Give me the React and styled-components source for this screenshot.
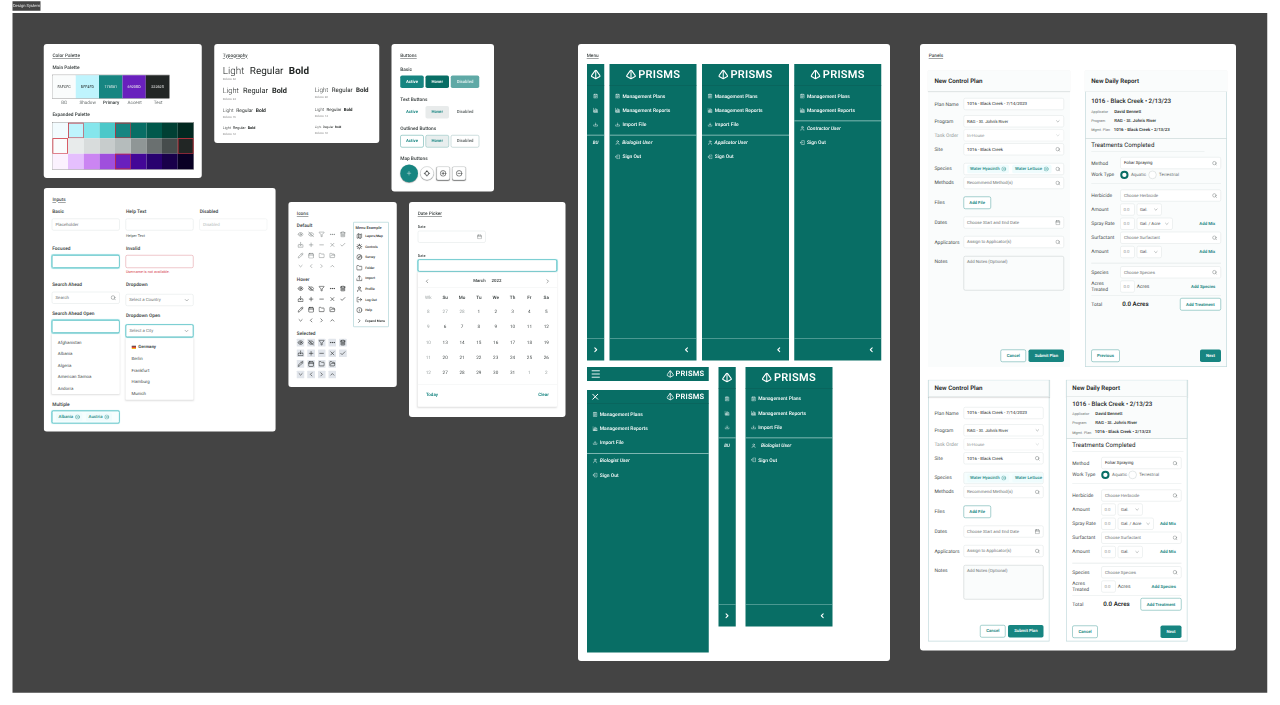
import React from "react";
import styled, { createGlobalStyle, css } from "styled-components";
import {
  Eye, EyeOff, Funnel, Ellipsis, Plus, Minus, X, Check, Pencil, Calendar,
  Folder, FolderOpen, ChevronDown, ChevronLeft, ChevronRight, ChevronUp, Map as MapIcon,
  Compass, User, LogOut, Info, Search, CircleX, CirclePlus, CircleMinus, Menu as Burger,
} from "lucide-react";

const c = {
  board: "#444444", text: "#222625", soft: "#464c4c", mute: "#6a7070", faint: "#b5bcbc",
  line: "#dfe4e5", primary: "#178581", dark: "#086e65", aqua: "#4bbcc0",
  bg: "#fafcfc", red: "#d64550",
};

/* The board is drawn at four times its size (1rem = 4px) and viewed at 25% zoom. */
const Global = createGlobalStyle`
  html { font-size: 4px; }
  body { margin: 0; background: #fff; overflow: hidden; }
  #root { font-family: Roboto, "Liberation Sans", sans-serif; color: ${c.text};
    text-rendering: geometricPrecision; line-height: 1; white-space: nowrap; }
  * { box-sizing: border-box; }
  svg { display: block; flex: none; }
`;

/* ---------- canvas ---------- */
const Viewport = styled.div`width: 1280px; height: 705px; overflow: hidden;`;
const Page = styled.div`
  width: 1280rem; height: 705rem; padding: 1.3rem 0 0 12.6rem; font-size: 5rem;
  transform: scale(0.25); transform-origin: 0 0;
`;
const Tab = styled.div`
  width: 27.8rem; height: 9.4rem; background: ${c.board}; color: #e8e8e8; font-size: 4.1rem;
  display: flex; align-items: center; justify-content: center;
`;
const Board = styled.main`
  margin-top: 2.2rem; width: 1254.6rem; height: 679.8rem; background: ${c.board};
  padding: 31rem 0 0 31.2rem; display: flex; align-items: flex-start;
`;
const Left = styled.div`width: 522rem; flex: none;`;
const CardRow = styled.div`
  display: flex; align-items: flex-start; gap: 12.4rem; height: ${(p) => p.$h || "auto"};
`;
const Card = styled.section`
  width: ${(p) => p.$w}rem; height: ${(p) => p.$h}rem; margin: ${(p) => p.$m || 0};
  flex: none; background: #fff; border-radius: 3rem; padding: 8rem 8.6rem;
`;
const Title = styled.h2`
  margin: 0; height: 7rem; line-height: 7.4rem; font-size: 4.75rem; font-weight: 500; color: ${c.soft};
  text-decoration: underline; text-decoration-thickness: 0.5rem; text-underline-offset: 0.8rem;
`;
const Heading = styled.h3`
  margin: ${(p) => p.$mt}rem 0 0; height: 7rem; line-height: 7.4rem; font-size: 4.8rem; font-weight: 600; color: ${c.soft};
`;

/* ---------- palette ---------- */
const Swatches = styled.div`
  display: grid; grid-template-columns: repeat(${(p) => p.$n}, 1fr); margin-top: 4.4rem;
  width: ${(p) => p.$w}rem; height: ${(p) => p.$h}rem; border: 0.6rem solid #777; margin-left: -0.5rem;
`;
const Swatch = styled.div`
  background: ${(p) => p.$c}; color: ${(p) => (p.$light ? "#f0f0f0" : c.text)}; font-size: 3.75rem;
  display: flex; align-items: center; justify-content: center;
  ${(p) => p.$marked && css`border: 0.9rem solid #cc2936;`}
`;
const Captions = styled.div`
  display: grid; grid-template-columns: repeat(5, 1fr); width: 117.5rem; height: 8rem; line-height: 8.6rem;
  text-align: center; font-size: 4.6rem; color: ${c.mute};
  b { font-weight: 600; color: ${c.soft}; }
`;

const MAIN = [["FAFCFC", "BG"], ["BFF4FD", "Shadow"], ["178581", "Primary"], ["6920BD", "Accent"], ["222625", "Text"]];
const RAMP = [
  "f2fbfe", "bff4fd", "85e6ec", "4bc8c9", "178581", "086e65", "01594c", "014034", "022820",
  "fafcfc", "e8ebeb", "d8dcdc", "c7cccc", "b5bcbc", "8f9696", "6a7070", "464c4c", "222625",
  "fbf2fe", "e5bffd", "cb85f2", "9f4fdd", "6920bd", "430797", "28016f", "19004a", "090024",
];
const MARKED = [1, 4, 9, 17, 22];

const Palette = () => (
  <Card $w={158} $h={134}>
    <Title>Color Palette</Title>
    <Heading $mt={4.5}>Main Palette</Heading>
    <Swatches $n={5} $w={117.8} $h={24}>
      {MAIN.map(([h], i) => <Swatch key={h} $c={"#" + h} $light={i > 1}>{h}</Swatch>)}
    </Swatches>
    <Captions>{MAIN.map(([h, n]) => (n === "Primary" ? <b key={h}>{n}</b> : <span key={h}>{n}</span>))}</Captions>
    <Heading $mt={4}>Expanded Palette</Heading>
    <Swatches $n={9} $w={142} $h={47.5}>
      {RAMP.map((h, i) => <Swatch key={i} $c={"#" + h} $marked={MARKED.includes(i)} />)}
    </Swatches>
  </Card>
);

/* ---------- typography ---------- */
const TypeRow = styled.div`display: grid; grid-template-columns: 92rem 1fr; height: ${(p) => p.$h}rem; margin-top: ${(p) => p.$mt || 0}rem;`;
const SpecimenLine = styled.div`
  display: flex; align-items: center; gap: 0.54em; height: ${(p) => p.$h}rem; font-size: ${(p) => p.$s}rem;
  span:first-child { font-weight: 300; }
  span:last-child { font-weight: 700; }
`;
const SpecimenNote = styled.div`height: 4rem; line-height: 4.6rem; font-size: 2.85rem; color: #8a8a8a;`;
const Specimen = ({ px, s, h }) => (
  <div>
    <SpecimenLine $s={s} $h={h}><span>Light</span><span>Regular</span><span>Bold</span></SpecimenLine>
    <SpecimenNote>Roboto {px}</SpecimenNote>
  </div>
);
const Typography = () => (
  <Card $w={165} $h={99}>
    <Title>Typography</Title>
    <TypeRow $mt={5} $h={22}><Specimen px={32} s={9.94} h={12.5} /></TypeRow>
    <TypeRow $h={20}><Specimen px={24} s={7.4} h={10.5} /><Specimen px={20} s={6.2} h={9} /></TypeRow>
    <TypeRow $h={18}><Specimen px={16} s={4.96} h={8.5} /><Specimen px={14} s={4.35} h={8} /></TypeRow>
    <TypeRow $h={13}><Specimen px={12} s={3.75} h={7.5} /><Specimen px={10} s={3.05} h={7} /></TypeRow>
  </Card>
);

/* ---------- shared line icons ---------- */
const draw = (paths) => ({ size = "5.2rem", strokeWidth = 2 }) => (
  <svg width={size} height={size} viewBox="0 0 24 24" fill="none" stroke="currentColor" strokeWidth={strokeWidth} strokeLinecap="round" strokeLinejoin="round">
    {paths.map((d) => <path key={d} d={d} />)}
  </svg>
);
const ImportTray = draw(["M12 2v12", "m7.5 9.5 4.5 4.5 4.5-4.5", "M6 12H2v9h20v-9h-4"]);
const ExportTray = draw(["M12 16V2", "m7 7 5-5 5 5", "M2 14v7h20v-7"]);
const Burst = draw(["M12 6a6 6 0 1 0 0 12 6 6 0 0 0 0-12Z", "M12 1.5v3M12 19.5v3M1.500 12h3M19.500 12h3M4.600 4.600l2.100 2.100M17.300 17.300l2.100 2.100M4.600 19.400l2.100-2.100M17.300 6.700l2.100-2.100"]);
const CanIcon = draw(["M5 6v14a2 2 0 0 0 2 2h10a2 2 0 0 0 2-2V6", "M3 6h18", "M6 6l1.500-4h9L18 6", "M8 11h8M8 14.500h8M8 18h8"]);
const Target = draw(["M12 5a7 7 0 1 0 0 14 7 7 0 0 0 0-14Z", "M12 2v4M12 18v4M2 12h4M18 12h4"]);
const PlansIcon = draw(["M8 4H4v18h16V4h-4", "M8 2h8v4H8z", "M8 11h8M8 14.500h8M8 18h5"]);
const ReportsIcon = draw(["M2 3v19h20", "M6 13h3v9H6z", "M11.500 6h3.500v16h-3.500z", "M17.500 10H21v12h-3.500z"]);
const ImportIcon = draw(["M12 6v9", "m8.500 11.500 3.500 3.500 3.500-3.500", "M3 15v5h18v-5"]);
const ExitIcon = draw(["M9 7V3h12v18H9v-4", "M14 12H2", "m5.500 8.500-3.500 3.500 3.500 3.500"]);

/* ---------- buttons ---------- */
const tones = {
  solid: css`background: ${c.primary}; color: #fff;`,
  solidHover: css`background: ${c.dark}; color: #fff;`,
  solidOff: css`background: #5fa9a6; color: #d9eceb;`,
  text: css`color: ${c.primary};`,
  textHover: css`background: #e8ebeb; color: ${c.primary};`,
  textOff: css`color: ${c.mute};`,
  outline: css`border: 0.6rem solid #4fa29f; background: #fff; color: ${c.primary};`,
  outlineHover: css`border: 0.6rem solid #7fb8b6; background: #e8eeee; color: ${c.primary};`,
  outlineOff: css`border: 0.6rem solid #9dbcbc; background: #fff; color: ${c.mute};`,
};
const Button = styled.button`
  all: unset; box-sizing: border-box; width: ${(p) => p.$w}rem; height: 12.5rem; border-radius: 1.8rem; flex: none;
  display: flex; align-items: center; justify-content: center; font-size: 4.3rem; font-weight: 600;
  ${(p) => tones[p.$tone]}
`;
const ButtonRow = styled.div`display: flex; align-items: center; gap: 1.8rem; margin-top: ${(p) => p.$mt}rem;`;
const MapButton = styled.div`
  width: ${(p) => p.$s}rem; height: ${(p) => p.$s}rem; border-radius: ${(p) => (p.$round ? "50%" : "2rem")};
  display: flex; align-items: center; justify-content: center; margin-right: ${(p) => p.$mr || 0}rem;
  background: ${(p) => (p.$fill ? c.primary : "#fff")}; color: ${(p) => (p.$fill ? "#fff" : c.text)};
  border: ${(p) => (p.$fill ? "none" : "0.4rem solid #8d9595")}; box-shadow: 0 0.5rem 1rem rgba(0, 0, 0, 0.5);
`;
const Trio = ({ kind, mt }) => (
  <ButtonRow $mt={mt}>
    <Button $w={23.5} $tone={kind}>Active</Button>
    <Button $w={23.5} $tone={kind + "Hover"}>Hover</Button>
    <Button $w={28.5} $tone={kind + "Off"}>Disabled</Button>
  </ButtonRow>
);
const Buttons = () => (
  <Card $w={102.5} $h={147.5}>
    <Title>Buttons</Title>
    <Heading $mt={6.5}>Basic</Heading><Trio kind="solid" mt={3} />
    <Heading $mt={7.5}>Text Buttons</Heading><Trio kind="text" mt={3.5} />
    <Heading $mt={6.5}>Outlined Buttons</Heading><Trio kind="outline" mt={3} />
    <Heading $mt={7}>Map Buttons</Heading>
    <ButtonRow $mt={3}>
      <MapButton $s={17.8} $round $fill $mr={0.5}><Plus size="6rem" strokeWidth={1.6} /></MapButton>
      <MapButton $s={13.4} $round $mr={0.9}><Target size="6.8rem" /></MapButton>
      <MapButton $s={13.4} $mr={0.8}><CirclePlus size="6.8rem" /></MapButton>
      <MapButton $s={13.4}><CircleMinus size="6.8rem" /></MapButton>
    </ButtonRow>
  </Card>
);

/* ---------- fields ---------- */
const states = {
  normal: css`border-color: ${c.line};`,
  off: css`border-color: #e9ecec; color: ${(p) => p.$c || c.faint};`,
  focus: css`border-color: ${c.aqua}; border-width: 0.9rem; box-shadow: 0 0 0.8rem 0.2rem #9fe0e3;`,
  invalid: css`border-color: #df8f97;`,
};
const Field = styled.div`
  height: ${(p) => p.$h || 12}rem; ${(p) => (p.$w ? `width: ${p.$w}rem; flex: none;` : "flex: 1; min-width: 0;")}
  margin-top: ${(p) => p.$mt || 0}rem; padding: 0.3rem ${(p) => (p.$tight ? 2.7 : 3.2)}rem 0; border: 0.7rem solid; border-radius: 1.8rem;
  background: ${(p) => p.$bg || "#fff"}; overflow: hidden;
  display: flex; align-items: center; justify-content: space-between; font-size: 4.35rem; color: ${(p) => p.$c || c.mute};
  & > svg { color: ${(p) => (p.$state === "off" ? c.faint : c.mute)}; }
  ${(p) => states[p.$state || "normal"]}
`;
const Columns = styled.div`display: flex; gap: 5.8rem; margin-left: -0.6rem;`;
const Column = styled.div`
  width: 68rem; display: flex; flex-direction: column;
  & > ${Field} { flex: none; }
`;
const ColumnHeading = styled(Heading)`padding-left: 0.4rem;`;
const Note = styled.div`
  height: 5rem; line-height: 5.6rem; margin-top: ${(p) => p.$mt}rem; font-size: 3.75rem; padding-left: 0.4rem;
  color: ${(p) => (p.$bad ? c.red : c.soft)};
`;
const List = styled.ul`
  list-style: none; margin: 0.5rem 0 0; padding: ${(p) => p.$pt}rem 0 0 6rem; height: ${(p) => p.$h}rem;
  border-radius: 1rem; box-shadow: 0 0.5rem 2rem rgba(0, 0, 0, 0.13);
`;
const Option = styled.li`
  height: 11.55rem; display: flex; align-items: center; gap: 2.2rem; font-size: 4.4rem; color: ${c.soft};
  font-weight: ${(p) => (p.$b ? 700 : 400)};
`;
const Chips = styled.div`display: flex; gap: 3.4rem; margin-left: 0.2rem;`;
const Chip = styled.span`
  height: 8.5rem; padding: 0 2.6rem; border-radius: 1.5rem; display: flex; align-items: center; gap: 1.8rem;
  font-size: 4.35rem; background: #effcfd; color: ${c.primary}; font-weight: 500;
`;
const Flag = () => (
  <svg width="4.5rem" height="3.6rem" viewBox="0 0 9 7">
    <rect width="9" height="2.4" fill="#222" /><rect y="2.3" width="9" height="2.4" fill="#d22" /><rect y="4.6" width="9" height="2.4" fill="#f3b71b" />
  </svg>
);
const Inputs = () => (
  <Card $w={232} $h={243.5}>
    <Title>Inputs</Title>
    <Columns>
      <Column>
        <ColumnHeading $mt={5}>Basic</ColumnHeading>
        <Field $mt={3.5}>Placeholder</Field>
        <ColumnHeading $mt={14}>Focused</ColumnHeading>
        <Field $mt={3.5} $h={13} $state="focus" />
        <ColumnHeading $mt={13.2}>Search Ahead</ColumnHeading>
        <Field $mt={3.6}>Search<Search size="5.6rem" /></Field>
        <ColumnHeading $mt={6.4}>Search Ahead Open</ColumnHeading>
        <Field $mt={2.8} $h={13} $state="focus" />
        <List $h={60.5} $pt={3.2}>
          {["Afghanistan", "Albania", "Algeria", "American Samoa", "Andorra"].map((t) => <Option key={t}>{t}</Option>)}
        </List>
        <ColumnHeading $mt={6.5}>Multiple</ColumnHeading>
        <Field $mt={3} $h={13} $state="focus" $bg="#f6fefe">
          <Chips><Chip>Albania<CircleX size="5rem" /></Chip><Chip>Austria<CircleX size="5rem" /></Chip></Chips>
        </Field>
      </Column>
      <Column>
        <ColumnHeading $mt={5}>Help Text</ColumnHeading>
        <Field $mt={3.5} />
        <Note $mt={2.3}>Helper Text</Note>
        <ColumnHeading $mt={6.7}>Invalid</ColumnHeading>
        <Field $mt={3.5} $h={13} $state="invalid" />
        <Note $mt={1.4} $bad>Username is not available.</Note>
        <ColumnHeading $mt={6.8}>Dropdown</ColumnHeading>
        <Field $mt={6}>Select a Country<ChevronDown size="6rem" /></Field>
        <ColumnHeading $mt={6}>Dropdown Open</ColumnHeading>
        <Field $mt={5.2} $h={13} $state="focus">Select a City<ChevronDown size="6rem" /></Field>
        <List $h={62} $pt={3.7}>
          <Option $b><Flag />Germany</Option>
          {["Berlin", "Frankfurt", "Hamburg", "Munich"].map((t) => <Option key={t}>{t}</Option>)}
        </List>
      </Column>
      <Column>
        <ColumnHeading $mt={5}>Disabled</ColumnHeading>
        <Field $mt={3.5} $state="off">Disabled</Field>
      </Column>
    </Columns>
  </Card>
);

/* ---------- icons ---------- */
const Split = styled.div`display: flex; align-items: flex-start; justify-content: space-between;`;
const IconGrid = styled.div`
  display: grid; grid-template-columns: repeat(5, 10.6rem); grid-auto-rows: 10.6rem; margin: 0.6rem 0 0 -1.6rem;
  justify-items: center; align-items: center; color: ${(p) => (p.$mode === "default" ? "#6a7070" : c.text)};
`;
const IconCell = styled.span`
  width: 7.6rem; height: 7.6rem; display: flex; align-items: center; justify-content: center; border-radius: 0.6rem;
  grid-column: ${(p) => p.$col}; background: ${(p) => (p.$on ? "#e1e5eb" : "transparent")};
`;
const ICONS = [
  [Eye, EyeOff, Funnel, Ellipsis, CanIcon],
  [ImportTray, Plus, Minus, X, Check],
  [Pencil, Calendar, Folder, FolderOpen],
  [ChevronDown, ChevronLeft, ChevronRight, ChevronUp],
];
const IconSet = ({ mode }) => (
  <IconGrid $mode={mode}>
    {ICONS.map((row, r) => row.map((I, i) => (
      <IconCell key={r + "-" + i} $col={i + 1} $on={mode === "selected"}><I size="6.2rem" strokeWidth={mode === "default" ? 1.8 : 2.2} /></IconCell>
    )))}
  </IconGrid>
);
const MenuExample = styled.div`
  width: 35.4rem; height: 105rem; margin: 5rem -0.6rem 0 0; border: 0.6rem solid #8fc2c6; padding: 1.3rem 0 0 1.7rem; border-radius: 0.6rem;
  h4 { margin: 0; font-size: 3.95rem; line-height: 7rem; font-weight: 600; color: ${c.soft}; }
`;
const MenuExampleItem = styled.div`
  height: 10.6rem; display: flex; align-items: center; gap: 2.7rem; padding-left: 0.8rem; font-size: 3.3rem; font-weight: 500;
`;
const EXAMPLE = [[MapIcon, "Layers/Map"], [Burst, "Controls"], [Compass, "Survey"], [Folder, "Folder"], [ExportTray, "Import"], [User, "Profile"], [LogOut, "Log Out"], [Info, "Help"], [ChevronRight, "Expand Menu"]];
const Icons = () => (
  <Card $w={108.5} $h={185} $m="14rem 0 0">
    <Title>Icons</Title>
    <Split>
      <div>
        <Heading $mt={4.5}>Default</Heading><IconSet mode="default" />
        <Heading $mt={4.2}>Hover</Heading><IconSet mode="hover" />
        <Heading $mt={4.2}>Selected</Heading><IconSet mode="selected" />
      </div>
      <MenuExample>
        <h4>Menu Example</h4>
        {EXAMPLE.map(([I, t]) => <MenuExampleItem key={t}><I size="6.2rem" strokeWidth={2.1} />{t}</MenuExampleItem>)}
      </MenuExample>
    </Split>
  </Card>
);

/* ---------- date picker ---------- */
const DateLabel = styled.div`height: 5rem; line-height: 5.4rem; margin-top: ${(p) => p.$mt}rem; font-size: 3.75rem; font-weight: 500; color: ${c.soft};`;
const Stack = styled.div`
  display: flex; flex-direction: column;
  & > ${Field} { flex: none; }
`;
const CalendarSheet = styled.div`height: 134.5rem; box-shadow: 0 0.5rem 2rem rgba(0, 0, 0, 0.13); border-radius: 1rem; margin-top: 0.5rem;`;
const CalHead = styled.div`
  height: 15.5rem; padding: 3rem 6.2rem 0; display: flex; align-items: center; justify-content: space-between;
  border-bottom: 0.6rem solid #eef0f0; color: ${c.soft}; font-size: 4.35rem; font-weight: 600;
  div { display: flex; gap: 6rem; }
`;
const CalGrid = styled.div`
  display: grid; grid-template-columns: repeat(8, 16.85rem); grid-template-rows: 13rem repeat(5, 15.25rem); padding: 3.5rem 2.2rem 0;
  place-items: center; font-size: 4.6rem; color: ${c.soft};
`;
const Day = styled.span`color: ${(p) => (p.$dim ? "#9ba2a2" : "inherit")}; font-weight: ${(p) => (p.$b ? 600 : 400)};`;
const CalFoot = styled.div`
  border-top: 0.6rem solid #eef0f0; margin-top: 3.7rem; height: 20rem; padding: 0 8.2rem; display: flex; align-items: center;
  justify-content: space-between; color: ${c.primary}; font-size: 4.5rem; font-weight: 600;
`;
const WEEKS = [[8, 27, 28, 1, 2, 3, 4, 5], [9, 6, 7, 8, 9, 10, 11, 12], [10, 13, 14, 15, 16, 17, 18, 19], [11, 20, 21, 22, 23, 24, 25, 26], [12, 27, 28, 29, 30, 31, 1, 2]];
const DatePicker = () => (
  <Card $w={156.5} $h={215} $m="14rem 0 0">
    <Title>Date Picker</Title>
    <Stack>
      <DateLabel $mt={6.8}>Date</DateLabel>
      <Field $mt={2} $w={68}><span /><Calendar size="5rem" /></Field>
      <DateLabel $mt={10}>Date</DateLabel>
      <Field $mt={1.5} $h={12.5} $state="focus" />
      <CalendarSheet>
        <CalHead><ChevronLeft size="6rem" /><div><span>March</span><span>2022</span></div><ChevronRight size="6rem" /></CalHead>
        <CalGrid>
          {["Wk", "Su", "Mo", "Tu", "We", "Th", "Fr", "Sa"].map((d, i) => <Day key={d} $b={i > 0} $dim={i === 0}>{d}</Day>)}
          {WEEKS.map((w, r) => w.map((d, i) => (
            <Day key={r + "-" + i} $dim={i === 0 || (r === 0 && d > 20) || (r === 4 && d < 3)}>{d}</Day>
          )))}
        </CalGrid>
        <CalFoot><span>Today</span><span>Clear</span></CalFoot>
      </CalendarSheet>
    </Stack>
  </Card>
);

/* ---------- menus ---------- */
const Side = styled.nav`
  width: ${(p) => p.$w}rem; height: ${(p) => p.$h}rem; flex: none; background: ${c.dark}; color: #fff;
  display: flex; flex-direction: column;
`;
const SideHead = styled.div`
  height: ${(p) => p.$h}rem; flex: none; display: flex; align-items: center;
  justify-content: ${(p) => (p.$bar ? "space-between" : "center")}; padding: ${(p) => (p.$bar ? "0 4.5rem 0 3.2rem" : "0")};
  border-bottom: ${(p) => (p.$plain ? "none" : "0.6rem solid #0a5c56")};
`;
const Brand = styled.div`
  display: flex; align-items: center; gap: ${(p) => p.$s * 0.2}rem; font-size: ${(p) => p.$s}rem; font-weight: 600; letter-spacing: 0.025em;
`;
const SideList = styled.div`
  padding: ${(p) => p.$pt ?? 3.3}rem 0 ${(p) => p.$pb || 0}rem; border-bottom: ${(p) => (p.$rule ? "0.8rem solid #a4cfcb" : "none")};
`;
const SideItem = styled.div`
  height: 14.2rem; display: flex; align-items: center; gap: ${(p) => p.$gap || 2.1}rem; font-size: 4.96rem; font-weight: 500;
  font-style: ${(p) => (p.$it ? "italic" : "normal")}; ${(p) => (p.$mini ? "justify-content: center;" : "padding-left: 5.5rem;")}
`;
const SideFoot = styled.div`
  margin-top: auto; height: 22rem; border-top: 0.7rem solid #8fc3be; display: flex; align-items: center;
  justify-content: ${(p) => (p.$mini ? "center" : "flex-end")}; padding-right: ${(p) => (p.$mini ? 0 : 6.3)}rem;
`;
const Prism = ({ size = "10rem" }) => (
  <svg width={size} height={size} viewBox="0 0 24 24" fill="none" stroke="currentColor" strokeWidth="2.5" strokeLinejoin="round" strokeLinecap="round">
    <path d="M10.800 2.200 1.800 14.600a1.400 1.400 0 0 0 .4 2.100l9.800 5.500 9.800-5.500a1.400 1.400 0 0 0 .4-2.100L13.200 2.200a1.500 1.500 0 0 0-2.400 0Z" />
    <path d="M12 3v19" />
  </svg>
);
const NAV = [[PlansIcon, "Management Plans"], [ReportsIcon, "Management Reports"], [ImportIcon, "Import File"]];
const MiniName = styled.span`font-size: 4.5rem;`;

const Entries = ({ user, count = 3, wideUser, mini }) => (
  <>
    <SideList $rule $pb={3.2}>
      {NAV.slice(0, count).map(([I, t]) => <SideItem key={t} $mini={mini}><I />{!mini && t}</SideItem>)}
    </SideList>
    <SideList $pt={wideUser ? 0.4 : 0}>
      {mini ? <SideItem $mini $it><MiniName>BU</MiniName></SideItem> : (
        <>
          <SideItem $it $gap={wideUser ? 5 : 2}><User size="5.2rem" />{user}</SideItem>
          <SideItem><ExitIcon />Sign Out</SideItem>
        </>
      )}
    </SideList>
  </>
);
const MiniSide = ({ h }) => (
  <Side $w={17.3} $h={h}>
    <SideHead $h={21.5}><Prism /></SideHead>
    <Entries mini />
    <SideFoot $mini><ChevronRight size="7.5rem" strokeWidth={3.4} /></SideFoot>
  </Side>
);
const FullSide = ({ h, ...rest }) => (
  <Side $w={87} $h={h}>
    <SideHead $h={21.5}><Brand $s={11}><Prism />PRISMS</Brand></SideHead>
    <Entries {...rest} />
    <SideFoot><ChevronLeft size="7.5rem" strokeWidth={3.4} /></SideFoot>
  </Side>
);
const SideRow = styled.div`display: flex; align-items: flex-start; gap: ${(p) => p.$gap}rem; margin: ${(p) => p.$mt}rem 0 0 0.3rem;`;
const MobileStack = styled.div`display: flex; flex-direction: column; gap: 9rem;`;
const SmallBrand = () => <Brand $s={7.5}><Prism size="7.5rem" />PRISMS</Brand>;
const Menus = () => (
  <Card $w={312} $h={617} $m="0 0 0 12.3rem">
    <Title>Menu</Title>
    <SideRow $mt={5.2} $gap={5.3}>
      <MiniSide h={296.3} />
      <FullSide h={296.3} user="Biologist User" />
      <FullSide h={296.3} user="Applicator User" />
      <FullSide h={296.3} user="Contractor User" count={2} />
    </SideRow>
    <SideRow $mt={6.5} $gap={9.7}>
      <MobileStack>
        <Side $w={121.7} $h={14}><SideHead $bar $plain $h={14}><Burger size="11rem" strokeWidth={2} /><SmallBrand /></SideHead></Side>
        <Side $w={121.7} $h={262.5}>
          <SideHead $bar $h={14}><X size="10rem" strokeWidth={2.4} /><SmallBrand /></SideHead>
          <Entries user="Biologist User" />
        </Side>
      </MobileStack>
      <MiniSide h={259.5} />
      <FullSide h={259.5} user="Biologist User" wideUser />
    </SideRow>
  </Card>
);

/* ---------- panels ---------- */
const PanelRow = styled.div`display: flex; gap: ${(p) => p.$gap}rem; margin: ${(p) => p.$mt}rem 0 0 -0.6rem;`;
const Panel = styled.div`
  width: ${(p) => p.$w}rem; height: ${(p) => p.$h}rem; flex: none; display: flex; flex-direction: column;
  background: ${(p) => (p.$tint ? c.bg : "#fff")}; box-shadow: ${(p) => (p.$line ? "inset 0 0 0 0.7rem #c3dbdd" : "none")};
`;
const PanelHead = styled.div`
  height: ${(p) => p.$h}rem; flex: none; padding-left: 6.3rem; display: flex; align-items: center; font-size: 6.2rem; font-weight: 600;
  background: ${c.bg}; border-bottom: 0.6rem solid #d5dcdd;
  box-shadow: 0 0.5rem 1rem rgba(0, 0, 0, 0.1)${(p) => p.$line && ", inset 0.7rem 0.7rem #c3dbdd, inset -0.7rem 0 #c3dbdd"};
`;
const PanelBody = styled.div`flex: 1; padding: 0 6rem ${(p) => p.$pb}rem 6.3rem; display: flex; flex-direction: column;`;
const FormRow = styled.div`
  display: flex; align-items: ${(p) => (p.$top ? "flex-start" : "center")}; height: ${(p) => p.$h || 12}rem; flex: none;
  margin-top: ${(p) => p.$mt}rem; gap: ${(p) => p.$gap || 0}rem; font-size: 4.96rem; color: ${(p) => (p.$off ? "#8f9696" : c.soft)};
`;
const RowLabel = styled.label`
  width: ${(p) => 29 - (p.$trim || 0)}rem; flex: none; line-height: 1.15; padding-top: ${(p) => p.$pt || 0}rem;
  white-space: ${(p) => (p.$wrap ? "normal" : "nowrap")}; ${(p) => p.$wrap && "padding-right: 8rem;"}
`;
const TextArea = styled.div`
  flex: 1; height: 34.4rem; border: 0.7rem solid #c5cdcd; border-radius: 1.8rem; padding: 3rem; font-size: 4.35rem;
  color: ${c.mute}; background: ${c.bg};
`;
const PanelFoot = styled.div`margin-top: auto; display: flex; gap: 2.5rem; justify-content: ${(p) => (p.$spread ? "space-between" : "flex-end")};`;
const Entry = ({ label, mt, value, icon: I, color, off, children }) => (
  <FormRow $mt={mt} $off={off}>
    <RowLabel>{label}</RowLabel>
    {children || <Field $c={color} $state={off ? "off" : "normal"}>{value}{I && <I size="5.2rem" />}</Field>}
  </FormRow>
);
const ControlPlan = ({ w, h, compact }) => (
  <Panel $w={w} $h={h} $tint={!compact} $line={compact}>
    <PanelHead $h={compact ? 17.7 : 21.2} $line={compact}>New Control Plan</PanelHead>
    <PanelBody $pb={compact ? 4 : 5}>
      <Entry label="Plan Name" mt={compact ? 10 : 6.5} value="1016 - Black Creek - 7/14/2023" color={c.text} />
      <Entry label="Program" mt={5.2} value="RAG - St. John’s River" color={c.text} icon={ChevronDown} />
      <Entry label="Task Order" mt={2} value="In-House" color="#8f9696" off icon={ChevronDown} />
      <Entry label="Site" mt={2} value="1016 - Black Creek" color={c.text} icon={Search} />
      <Entry label="Species" mt={7.6}>
        <Field $bg={compact ? "#f6fefe" : "#fff"}>
          <Chips>
            <Chip>Water Hyacinth<CircleX size="5rem" /></Chip>
            <Chip>Water Lettuce{!compact && <CircleX size="5rem" />}</Chip>
          </Chips>
          {!compact && <Search size="5.2rem" />}
        </Field>
      </Entry>
      <Entry label="Methods" mt={2} value="Recommend Method(s)" icon={Search} />
      <Entry label="Files" mt={7.8}><Button $w={27.5} $tone="outline">Add File</Button></Entry>
      <Entry label="Dates" mt={7.8} value="Choose Start and End Date" icon={Calendar} />
      <Entry label="Applicators" mt={7.5} value="Assign to Applicator(s)" icon={Search} />
      <FormRow $mt={8} $h={34} $top><RowLabel $pt={2.6}>Notes</RowLabel><TextArea>Add Notes (Optional)</TextArea></FormRow>
      <PanelFoot>
        <Button $w={25.5} $tone="outline">Cancel</Button>
        <Button $w={35.5} $tone="solid">Submit Plan</Button>
      </PanelFoot>
    </PanelBody>
  </Panel>
);

const Summary = styled.div`
  height: ${(p) => p.$h}rem; flex: none; padding: ${(p) => p.$pt}rem 0 0 6.3rem; background: ${c.bg}; border-bottom: 0.7rem solid #b9cacb;
  box-shadow: inset 0.7rem 0 #c3dbdd, inset -0.7rem 0 #c3dbdd;
  h4 { margin: 0 0 1.5rem; height: 8rem; line-height: 8rem; font-size: 6.2rem; font-weight: 500; }
`;
const Meta = styled.div`
  height: 9.1rem; display: flex; align-items: center; font-size: 4.35rem; font-weight: 500;
  span { width: ${(p) => p.$w || 23}rem; font-size: 3.7rem; font-weight: 400; color: ${c.mute}; }
`;
const Section = styled.h4`
  margin: 2.5rem ${(p) => p.$mr}rem 0 0; height: 10.7rem; line-height: 8.4rem; font-size: 6.2rem; font-weight: 400; color: ${c.text};
  border-bottom: 0.6rem solid #e2e8e8; flex: none;
`;
const Rule = styled.div`height: 0.7rem; flex: none; background: #e2e8e8; margin-top: ${(p) => p.$mt}rem;`;
const Radio = styled.span`
  width: 8.2rem; height: 8.2rem; border-radius: 50%; flex: none; background: #fff;
  border: ${(p) => (p.$on ? `2.2rem solid ${c.dark}` : "0.6rem solid #c9d1d1")};
`;
const RadioText = styled.span`font-size: 4.45rem; color: ${c.mute}; width: ${(p) => p.$w}rem; padding-left: 2.5rem;`;
const LinkAction = styled.a`margin-left: auto; margin-right: 5.6rem; color: ${c.primary}; font-size: 4.35rem; font-weight: 600;`;
const Total = styled.strong`font-size: 6.2rem; font-weight: 600; color: ${c.text}; flex: 1; padding-left: 2rem;`;
const Amount = ({ label, mt, unit = "Gal.", w = 25, link }) => (
  <FormRow $mt={mt} $gap={2}>
    <RowLabel $trim={2}>{label}</RowLabel>
    <Field $w={14.5} $c="#8f9696" $tight>0.0</Field>
    <Field $w={w} $c={c.soft} $tight>{unit}<ChevronDown size="5.2rem" /></Field>
    {link && <LinkAction>{link}</LinkAction>}
  </FormRow>
);
const DailyReport = ({ w, h, compact }) => (
  <Panel $w={w} $h={h} $tint={!compact} $line>
    <PanelHead $h={compact ? 17.7 : 21.2} $line={compact}>New Daily Report</PanelHead>
    <Summary $h={compact ? 41.3 : 46.8} $pt={compact ? 2.9 : 5.7}>
      <h4>1016 - Black Creek • 2/13/23</h4>
      <Meta><span>Applicator</span>David Bennett</Meta>
      <Meta><span>Program</span>RAG - St. John’s River</Meta>
      <Meta $w={22.5}><span>Mgmt. Plan</span>1016 - Black Creek • 2/13/23</Meta>
    </Summary>
    <PanelBody $pb={compact ? 3.5 : 5}>
      <Section $mr={compact ? -2 : 16.5}>Treatments Completed</Section>
      <Entry label="Method" mt={5.5} value="Foliar Spraying" color={c.text} icon={Search} />
      <FormRow $mt={0} $h={11.5}>
        <RowLabel>Work Type</RowLabel>
        <Radio $on /><RadioText $w={compact ? 19 : 20}>Aquatic</RadioText><Radio /><RadioText $w={26}>Terrestrial</RadioText>
      </FormRow>
      <Rule $mt={2.8} />
      <Entry label="Herbicide" mt={5.4} value="Choose Herbicide" icon={Search} />
      <Amount label="Amount" mt={2} />
      <Amount label="Spray Rate" mt={2.2} unit="Gal. / Acre" w={36} link="Add Mix" />
      <Entry label="Surfactant" mt={2.1} value="Choose Surfactant" icon={Search} />
      <Amount label="Amount" mt={2.1} link="Add Mix" />
      <Rule $mt={4.8} />
      <Entry label="Species" mt={2.9} value="Choose Species" icon={Search} />
      <FormRow $mt={2.3} $gap={2}>
        <RowLabel $trim={2} $wrap>Acres Treated</RowLabel>
        <Field $w={14.5} $c="#8f9696" $tight>0.0</Field>Acres<LinkAction>Add Species</LinkAction>
      </FormRow>
      <Rule $mt={2.6} />
      <FormRow $mt={2.2} $h={12.5}>
        <RowLabel>Total</RowLabel>
        <Total>0.0 Acres</Total>
        <Button $w={41} $tone="outline">Add Treatment</Button>
      </FormRow>
      <PanelFoot $spread>
        <Button $w={compact ? 25.5 : 28.5} $tone="outline">{compact ? "Cancel" : "Previous"}</Button>
        <Button $w={21} $tone="solid">Next</Button>
      </PanelFoot>
    </PanelBody>
  </Panel>
);
const Panels = () => (
  <Card $w={316} $h={606.5} $m="0 0 0 30rem">
    <Title>Panels</Title>
    <PanelRow $mt={11.5} $gap={14.8}>
      <ControlPlan w={142} h={296.5} />
      <DailyReport w={142} h={296.5} />
    </PanelRow>
    <PanelRow $mt={12.5} $gap={16.4}>
      <ControlPlan w={121.5} h={262} compact />
      <DailyReport w={121.5} h={262} compact />
    </PanelRow>
  </Card>
);

export default function App() {
  return (
    <Viewport>
      <Global />
      <Page>
        <Tab>Design System</Tab>
        <Board>
          <Left>
            <CardRow $h="144rem"><Palette /><Typography /><Buttons /></CardRow>
            <CardRow><Inputs /><Icons /><DatePicker /></CardRow>
          </Left>
          <Menus />
          <Panels />
        </Board>
      </Page>
    </Viewport>
  );
}
